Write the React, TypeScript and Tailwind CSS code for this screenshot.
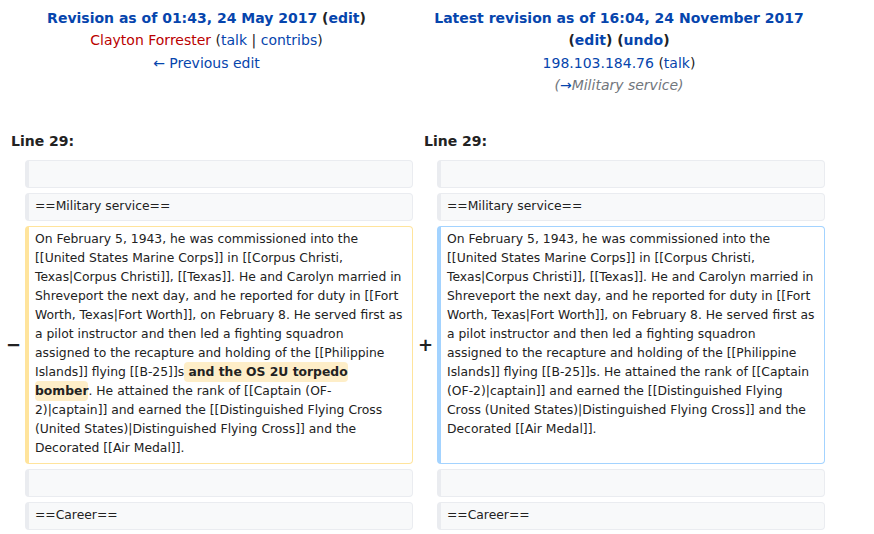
import React from 'react';

const link = 'text-[#0645ad]';

function Context({ text }: { text?: string }) {
  return (
    <div className="min-h-[28px] rounded-[4px] border border-[#eaecf0] border-l-4 bg-[#f8f9fa] px-[6px] py-[3px] text-[12.35px] leading-[19px] text-[#222]">
      {text}
    </div>
  );
}

function Marker({ sign }: { sign: string }) {
  return (
    <div className="flex items-center justify-end pr-[4px] text-[18px] font-bold text-[#222]">{sign}</div>
  );
}

export default function App() {
  return (
    <div className="h-[534px] w-[874px] overflow-hidden bg-white font-['DejaVu_Sans',sans-serif] text-[#222]">
      <div className="grid grid-cols-[25px_388px_24px_388px] gap-y-[5px]">
        <div className="col-span-2 pt-[7px] text-center text-[14px] leading-[22.4px]">
          <div className="font-bold">
            <span className={link}>Revision as of 01:43, 24 May 2017</span> (<span className={link}>edit</span>)
          </div>
          <div>
            <span className="text-[#ba0000]">Clayton Forrester</span> (<span className={link}>talk</span> |{' '}
            <span className={link}>contribs</span>)
          </div>
          <div className={link}>← Previous edit</div>
        </div>
        <div className="col-span-2 pt-[7px] text-center text-[14px] leading-[22.4px]">
          <div className="font-bold">
            <span className={link}>Latest revision as of 16:04, 24 November 2017</span>
          </div>
          <div className="font-bold">
            (<span className={link}>edit</span>) (<span className={link}>undo</span>)
          </div>
          <div>
            <span className={link}>198.103.184.76</span> (<span className={link}>talk</span>)
          </div>
          <div className="italic text-[#72777d]">
            (<span className={link}>→</span>Military service)
          </div>
        </div>

        <div className="col-span-2 mt-[28px] pb-[3px] pl-[11px] text-[14px] font-bold leading-[22px]">Line 29:</div>
        <div className="col-span-2 mt-[28px] pb-[3px] pl-[11px] text-[14px] font-bold leading-[22px]">Line 29:</div>

        <div />
        <Context />
        <div />
        <Context />

        <div />
        <Context text="==Military service==" />
        <div />
        <Context text="==Military service==" />

        <Marker sign="−" />
        <div className="rounded-[4px] border border-[#ffe49c] border-l-4 bg-white pt-[3px] pb-[5px] pl-[6px] pr-[4px] text-[12.35px] leading-[19px] text-[#222]">
          On February 5, 1943, he was commissioned into the [[United States Marine Corps]] in [[Corpus Christi,
          Texas|Corpus Christi]], [[Texas]]. He and Carolyn married in Shreveport the next day, and he reported for
          duty in [[Fort Worth, Texas|Fort Worth]], on February 8. He served first as a pilot instructor and then led a
          fighting squadron
          <br />
          assigned to the recapture and holding of the [[Philippine Islands]] flying [[B-25]]s
          <span className="rounded-[4px] bg-[#feeec8] py-[3px] font-bold [box-decoration-break:clone]">
            {' '}and the OS 2U torpedo bomber
          </span>
          . He attained the rank of [[Captain (OF-
          <br />
          2)|captain]] and earned the [[Distinguished Flying Cross (United States)|Distinguished Flying Cross]] and the
          Decorated [[Air Medal]].
        </div>
        <Marker sign="+" />
        <div className="rounded-[4px] border border-[#a3d3ff] border-l-4 bg-white pt-[3px] pb-[5px] pl-[6px] pr-[4px] text-[12.35px] leading-[19px] text-[#222]">
          On February 5, 1943, he was commissioned into the [[United States Marine Corps]] in [[Corpus Christi,
          Texas|Corpus Christi]], [[Texas]]. He and Carolyn married in Shreveport the next day, and he reported for
          duty in [[Fort Worth, Texas|Fort Worth]], on February 8. He served first as a pilot instructor and then led a
          fighting squadron
          <br />
          assigned to the recapture and holding of the [[Philippine Islands]] flying [[B-25]]s. He attained the rank of
          [[Captain (OF-2)|captain]] and earned the [[Distinguished Flying Cross (United States)|Distinguished Flying
          Cross]] and the Decorated [[Air Medal]].
        </div>

        <div />
        <Context />
        <div />
        <Context />

        <div />
        <Context text="==Career==" />
        <div />
        <Context text="==Career==" />
      </div>
    </div>
  );
}
